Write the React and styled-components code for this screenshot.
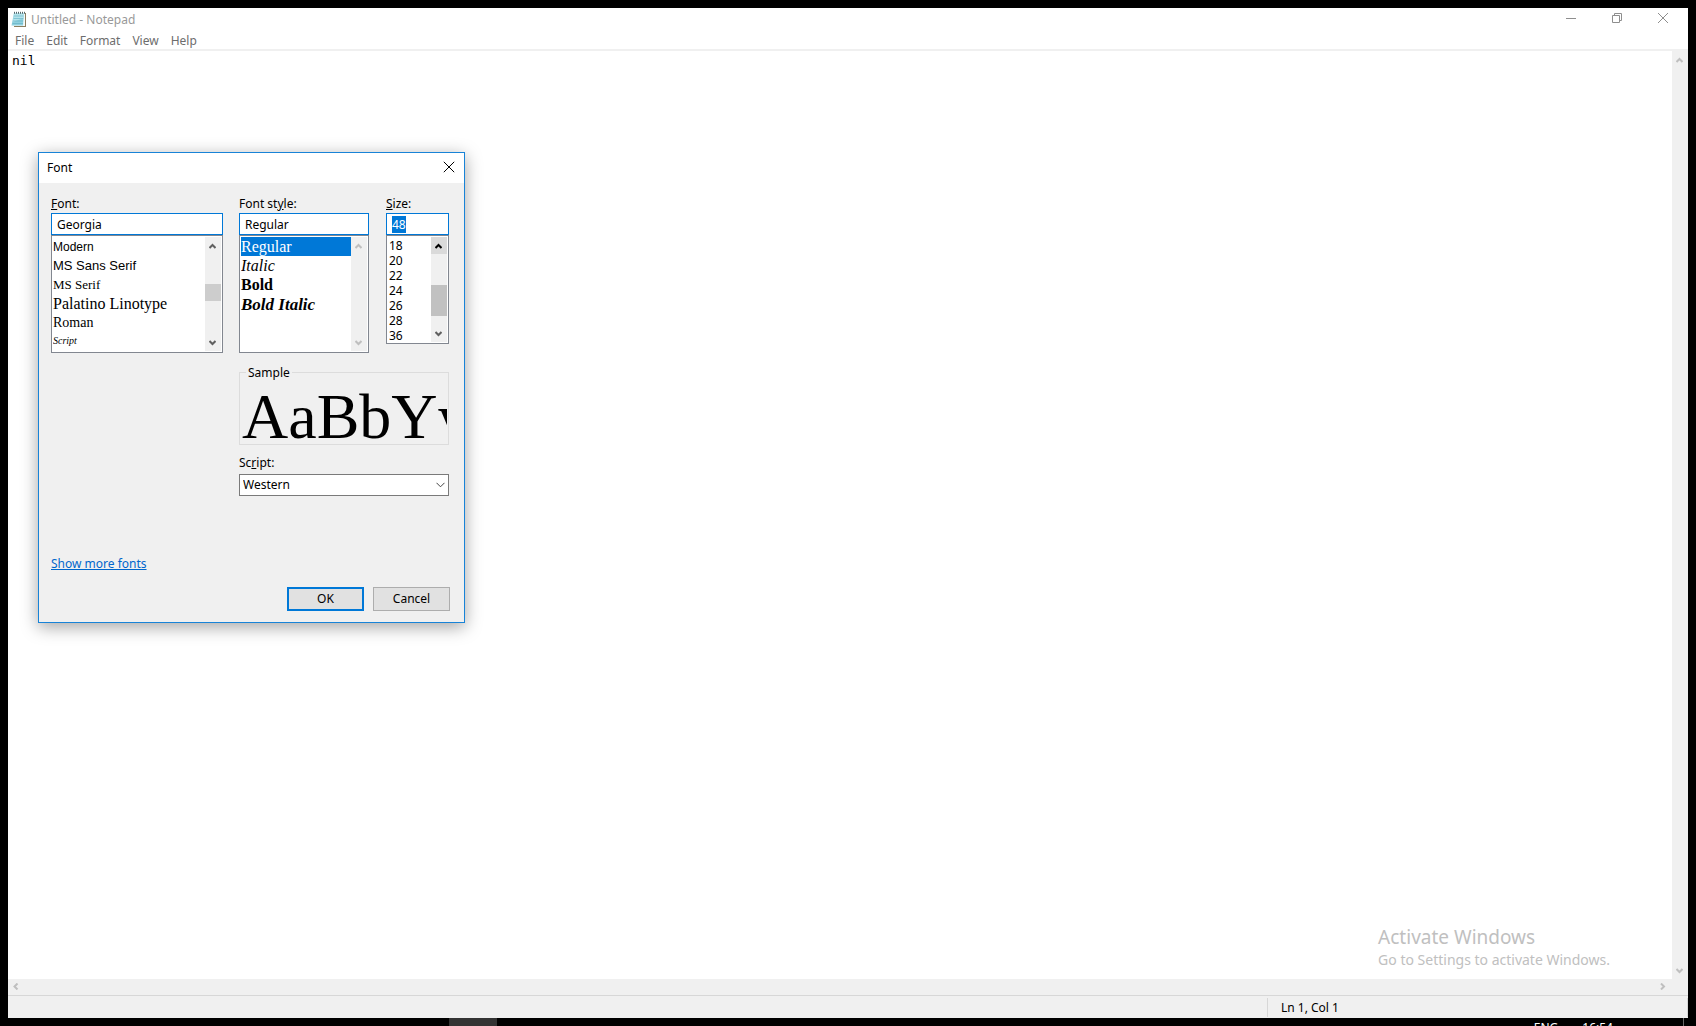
import React, { useEffect, useRef } from "react";
import styled, { createGlobalStyle, css } from "styled-components";

const ui = '"Noto Sans", "Open Sans", sans-serif';
const serif = '"Liberation Serif", serif';
const sans = '"Liberation Sans", sans-serif';

const GlobalStyle = createGlobalStyle`
  *, *::before, *::after { box-sizing: border-box; }
  body { margin: 0; background: #000; }
  button, input, select, textarea { font: inherit; color: inherit; margin: 0; border-radius: 0; }
`;

const Desktop = styled.div`
  height: 100vh;
  display: flex;
  flex-direction: column;
  background: #000;
  font: 12px/16px ${ui};
  color: #000;
  overflow: hidden;
`;

const NotepadWindow = styled.main`
  position: relative;
  flex: 1;
  min-height: 0;
  margin: 8px 8px 0;
  display: flex;
  flex-direction: column;
  background: #fff;
`;

const TitleBar = styled.header`
  height: 23px;
  display: flex;
  align-items: center;
  padding: 0 2px 0 3px;
  gap: 4px;
`;

const WindowTitle = styled.h1`
  flex: 1;
  margin: 0;
  font-size: 12px;
  font-weight: 400;
  color: #999;
`;

const CaptionGroup = styled.div`
  display: flex;
  align-self: flex-start;
`;

const CaptionButton = styled.button`
  width: 46px;
  height: 20px;
  padding: 0;
  border: 0;
  background: none;
  color: #8e8e8e;
  display: grid;
  place-items: center;
`;

const MenuBar = styled.nav`
  height: 20px;
  display: flex;
  padding-left: 1px;
  border-bottom: 2px solid #f0f0f0;
`;

const MenuButton = styled.button`
  padding: 2px 6px 0;
  border: 0;
  background: none;
  color: #6d6d6d;
`;

const EditorRow = styled.div`
  position: relative;
  flex: 1;
  min-height: 0;
  display: flex;
`;

const Editor = styled.textarea`
  flex: 1;
  border: 0;
  outline: 0;
  resize: none;
  overflow: hidden;
  padding: 2px 4px;
  font: 13px/16px "DejaVu Sans Mono", monospace;
`;

const Track = styled.div`
  display: flex;
  justify-content: space-between;
  align-items: center;
  background: #f0f0f0;
  color: ${(p) => p.$tone || "#bfbfbf"};
  ${(p) =>
    p.$horizontal
      ? css`height: 16px; padding-right: 17px; align-items: flex-start;`
      : css`width: 16px; flex-direction: column;`}
`;

const ArrowButton = styled.button`
  width: 16px;
  height: ${(p) => (p.$short ? 15 : 17)}px;
  padding: 0 1px 0 0;
  border: 0;
  flex: none;
  display: grid;
  place-items: center;
  background: ${(p) => (p.$hot ? "#dadada" : "transparent")};
  color: ${(p) => (p.$hot ? "#000" : "inherit")};
`;

const Thumb = styled.div`
  width: 100%;
  height: ${(p) => p.$size}px;
  margin-top: ${(p) => p.$before}px;
  margin-bottom: auto;
  background: ${(p) => p.$color};
`;

const Watermark = styled.aside`
  position: absolute;
  right: 78px;
  bottom: 9px;
  color: #c0c0c0;
  font-size: 14px;
  line-height: 20px;
  pointer-events: none;
`;

const WatermarkTitle = styled.div`
  font-size: 19px;
  line-height: 26px;
`;

const StatusBar = styled.footer`
  height: 23px;
  display: flex;
  justify-content: flex-end;
  padding-top: 2px;
  padding-bottom: 1px;
  border-top: 1px solid #d7d7d7;
  background: #f0f0f0;
`;

const StatusCell = styled.div`
  width: 421px;
  display: flex;
  align-items: center;
  padding-left: 13px;
  border-left: 1px solid #d7d7d7;
  border-right: 1px solid #d7d7d7;
`;

const Taskbar = styled.div`
  height: 8px;
  flex: none;
  display: flex;
  padding-right: 12px;
  overflow: hidden;
  color: #fff;
`;

const TaskItem = styled.div`
  width: 48px;
  margin: 0 auto 0 449px;
  background: #333;
`;

const TrayText = styled.span`
  padding-top: 2px;
  margin-right: ${(p) => p.$after}px;
`;

const TrayEdge = styled.div`
  width: 1px;
  background: #666;
`;

const Dialog = styled.section`
  position: absolute;
  left: 30px;
  top: 144px;
  width: 427px;
  height: 471px;
  display: flex;
  flex-direction: column;
  border: 1px solid #1883d7;
  background: #f0f0f0;
  box-shadow: 0 4px 16px rgba(0, 0, 0, 0.36);
`;

const DialogHeader = styled.header`
  height: 30px;
  display: flex;
  align-items: center;
  justify-content: space-between;
  padding-left: 8px;
  background: #fff;
`;

const DialogTitle = styled.h2`
  margin: 0;
  font-size: 12px;
  font-weight: 400;
`;

const CloseButton = styled.button`
  width: 30px;
  height: 30px;
  padding: 0 0 2px;
  border: 0;
  background: none;
  display: grid;
  place-items: center;
`;

const DialogBody = styled.form`
  flex: 1;
  display: flex;
  flex-direction: column;
  padding: 13px 14px 11px 12px;
`;

const Fields = styled.div`
  display: grid;
  grid-template-columns: 172px 131px 63px;
  column-gap: 16px;
`;

const Field = styled.div`
  display: flex;
  flex-direction: column;
  max-width: ${(p) => p.$max || "none"};
`;

const Label = styled.label`
  height: 16px;
  margin-bottom: ${(p) => p.$gap || 1}px;
`;

const TextBox = styled.input`
  width: 100%;
  height: 22px;
  padding: 0 5px;
  border: 1px solid #0078d7;
  outline: 0;
  background: #fff;
  &::selection { background: #0078d7; color: #fff; }
`;

const ListFrame = styled.div`
  display: flex;
  height: ${(p) => p.$height}px;
  padding: 1px;
  border: 1px solid #828790;
  background: #fff;
`;

const ListBox = styled.select`
  flex: 1;
  min-width: 0;
  border: 0;
  outline: 0;
  padding: 0;
  background: #fff;
  overflow: hidden;
  scrollbar-width: none;
  appearance: none;
`;

const Choice = styled.option`
  height: ${(p) => p.$row}px;
  min-height: 0;
  padding: ${(p) => p.$top || 0}px 0 0 ${(p) => p.$inset || 0}px;
  font-family: ${(p) => p.$font || ui};
  font-size: ${(p) => p.$size || 12}px;
  font-weight: ${(p) => (p.$bold ? 700 : 400)};
  font-style: ${(p) => (p.$italic ? "italic" : "normal")};
  color: #000;
  &:checked {
    background: #0078d7 linear-gradient(#0078d7, #0078d7);
    color: #fff;
  }
`;

const Lower = styled.div`
  display: flex;
  flex-direction: column;
  width: 210px;
  margin-left: 188px;
`;

const SampleGroup = styled.fieldset`
  height: 80px;
  min-width: 0;
  margin: 12px 0 10px;
  padding: 0 1px 0 2px;
  border: 1px solid #dcdcdc;
`;

const SampleLegend = styled.legend`
  height: 15px;
  line-height: 16px;
  margin-left: 4px;
  padding: 0 2px;
`;

const Sample = styled.output`
  display: block;
  height: 64px;
  overflow: hidden;
  white-space: nowrap;
  font: 64px/74px ${serif};
`;

const ComboFrame = styled.div`
  display: grid;
  align-items: center;
  & > * { grid-area: 1 / 1; }
  & > svg { justify-self: end; margin-right: 4px; pointer-events: none; }
`;

const Combo = styled.select`
  height: 22px;
  padding: 0 3px;
  border: 1px solid #7a7a7a;
  outline: 0;
  background: #fff;
  appearance: none;
`;

const MoreLink = styled.a`
  align-self: flex-start;
  margin-top: auto;
  margin-bottom: 15px;
  color: #0066cc;
  text-decoration: underline;
`;

const Actions = styled.div`
  display: flex;
  justify-content: flex-end;
  gap: 9px;
`;

const PushButton = styled.button`
  width: 77px;
  height: 24px;
  padding: 0;
  border: ${(p) => (p.$primary ? "2px solid #0078d7" : "1px solid #adadad")};
  background: #e1e1e1;
`;

const ARROWS = {
  up: "M.5 6 3.500 3 6.500 6",
  down: "M.5 2 3.500 5 6.500 2",
  left: "M5.500 .5 2.500 3.500 5.500 6.500",
  right: "M2 .5 5 3.500 2 6.500",
};

function Arrow({ dir }) {
  return (
    <svg width="7" height="7" viewBox="0 0 7 7" fill="none" stroke="currentColor" strokeWidth="2" aria-hidden="true">
      <path d={ARROWS[dir]} />
    </svg>
  );
}

function ScrollBar({ horizontal, tone, hot, thumb }) {
  return (
    <Track $horizontal={horizontal} $tone={tone}>
      <ArrowButton type="button" $hot={hot} $short={horizontal} aria-label="Scroll back">
        <Arrow dir={horizontal ? "left" : "up"} />
      </ArrowButton>
      {thumb && <Thumb $size={thumb.size} $before={thumb.before} $color={thumb.color} />}
      <ArrowButton type="button" $short={horizontal} aria-label="Scroll forward">
        <Arrow dir={horizontal ? "right" : "down"} />
      </ArrowButton>
    </Track>
  );
}

function NotepadIcon() {
  return (
    <svg width="16" height="17" viewBox="0 0 16 17" aria-hidden="true">
      <path d="M4 2h11v14H3z" fill="#8b7d5e" />
      <path d="M3 2h11v13H2z" fill="#f4fafa" />
      <path d="M3 2h10l-1 12.500H.5z" fill="#8fd0de" />
      <path d="M3 2h10l-.4 5L2 11z" fill="#b5e3eb" />
      <path d="M3 5h9.500M2.600 7.500h9.700M2 10h10M1.500 12.500h10.500" stroke="#5eafc2" strokeWidth=".6" />
      <path d="M3.500.8v2M5.500.8v2M7.500.8v2M9.500.8v2M11.500.8v2M13.500.8v2" stroke="#55686c" />
    </svg>
  );
}

const FONTS = [
  { name: "Modern", font: sans, size: 12, top: 3 },
  { name: "MS Sans Serif", font: sans, size: 13, top: 2 },
  { name: "MS Serif", font: serif, size: 13, top: 2 },
  { name: "Palatino Linotype", font: serif, size: 16, top: 1 },
  { name: "Roman", font: serif, size: 14, top: 2 },
  { name: "Script", font: serif, size: 10, top: 3, italic: true },
];

const STYLES = [
  { name: "Regular", size: 16 },
  { name: "Italic", size: 16, italic: true },
  { name: "Bold", size: 16, bold: true },
  { name: "Bold Italic", size: 17, bold: true, italic: true },
];

const SIZES = [18, 20, 22, 24, 26, 28, 36];

function FontDialog() {
  const sizeRef = useRef(null);
  useEffect(() => {
    sizeRef.current.focus();
    sizeRef.current.select();
  }, []);

  return (
    <Dialog role="dialog" aria-labelledby="font-dialog-title">
      <DialogHeader>
        <DialogTitle id="font-dialog-title">Font</DialogTitle>
        <CloseButton type="button" aria-label="Close">
          <svg width="12" height="12" viewBox="0 0 12 12" stroke="#000" fill="none" aria-hidden="true">
            <path d="M.8.8l10.400 10.400M11.200.8.8 11.200" />
          </svg>
        </CloseButton>
      </DialogHeader>
      <DialogBody onSubmit={(e) => e.preventDefault()}>
        <Fields>
          <Field>
            <Label htmlFor="font-name"><u>F</u>ont:</Label>
            <TextBox id="font-name" defaultValue="Georgia" />
            <ListFrame $height={118}>
              <ListBox size={6} aria-label="Fonts">
                {FONTS.map((f) => (
                  <Choice key={f.name} $row={19} $top={f.top} $font={f.font} $size={f.size} $italic={f.italic}>{f.name}</Choice>
                ))}
              </ListBox>
              <ScrollBar tone="#606060" thumb={{ size: 17, before: 30, color: "#cdcdcd" }} />
            </ListFrame>
          </Field>
          <Field $max="130px">
            <Label htmlFor="font-style">Font st<u>y</u>le:</Label>
            <TextBox id="font-style" defaultValue="Regular" />
            <ListFrame $height={118}>
              <ListBox size={6} defaultValue="Regular" aria-label="Font styles">
                {STYLES.map((s) => (
                  <Choice key={s.name} $row={19} $top={1} $font={serif} $size={s.size} $bold={s.bold} $italic={s.italic}>{s.name}</Choice>
                ))}
              </ListBox>
              <ScrollBar />
            </ListFrame>
          </Field>
          <Field>
            <Label htmlFor="font-size"><u>S</u>ize:</Label>
            <TextBox id="font-size" ref={sizeRef} defaultValue="48" />
            <ListFrame $height={109}>
              <ListBox size={7} aria-label="Sizes">
                {SIZES.map((n) => (
                  <Choice key={n} $row={15} $inset={1}>{n}</Choice>
                ))}
              </ListBox>
              <ScrollBar tone="#606060" hot thumb={{ size: 31, before: 31, color: "#c1c1c1" }} />
            </ListFrame>
          </Field>
        </Fields>
        <Lower>
          <SampleGroup>
            <SampleLegend>Sample</SampleLegend>
            <Sample>AaBbYyZz</Sample>
          </SampleGroup>
          <Label htmlFor="font-script" $gap={3}>Sc<u>r</u>ipt:</Label>
          <ComboFrame>
            <Combo id="font-script" defaultValue="Western">
              <option>Western</option>
            </Combo>
            <svg width="9" height="6" viewBox="0 0 9 6" fill="none" stroke="#444" aria-hidden="true">
              <path d="M.5.8l4 4 4-4" />
            </svg>
          </ComboFrame>
        </Lower>
        <MoreLink href="#fonts">Show more fonts</MoreLink>
        <Actions>
          <PushButton type="submit" $primary>OK</PushButton>
          <PushButton type="button">Cancel</PushButton>
        </Actions>
      </DialogBody>
    </Dialog>
  );
}

function CaptionButtons() {
  return (
    <CaptionGroup>
      <CaptionButton type="button" aria-label="Minimize">
        <svg width="10" height="10" viewBox="0 0 10 10" stroke="currentColor" fill="none"><path d="M0 5.500h10" /></svg>
      </CaptionButton>
      <CaptionButton type="button" aria-label="Restore">
        <svg width="10" height="10" viewBox="0 0 10 10" stroke="currentColor" fill="none">
          <path d="M.5 2.500h7v7h-7zM2.500 2.500v-2h7v7h-2" />
        </svg>
      </CaptionButton>
      <CaptionButton type="button" aria-label="Close window">
        <svg width="10" height="10" viewBox="0 0 10 10" stroke="currentColor" fill="none"><path d="M0 0l10 10M10 0 0 10" /></svg>
      </CaptionButton>
    </CaptionGroup>
  );
}

export default function App() {
  return (
    <Desktop>
      <GlobalStyle />
      <NotepadWindow>
        <TitleBar>
          <NotepadIcon />
          <WindowTitle>Untitled - Notepad</WindowTitle>
          <CaptionButtons />
        </TitleBar>
        <MenuBar>
          {["File", "Edit", "Format", "View", "Help"].map((m) => (
            <MenuButton key={m} type="button">{m}</MenuButton>
          ))}
        </MenuBar>
        <EditorRow>
          <Editor defaultValue="nil" spellCheck={false} aria-label="Document text" />
          <ScrollBar />
          <Watermark>
            <WatermarkTitle>Activate Windows</WatermarkTitle>
            Go to Settings to activate Windows.
          </Watermark>
        </EditorRow>
        <ScrollBar horizontal />
        <StatusBar>
          <StatusCell>Ln 1, Col 1</StatusCell>
        </StatusBar>
        <FontDialog />
      </NotepadWindow>
      <Taskbar>
        <TaskItem />
        <TrayText $after={24}>ENG</TrayText>
        <TrayText $after={70}>16:54</TrayText>
        <TrayEdge />
      </Taskbar>
    </Desktop>
  );
}
